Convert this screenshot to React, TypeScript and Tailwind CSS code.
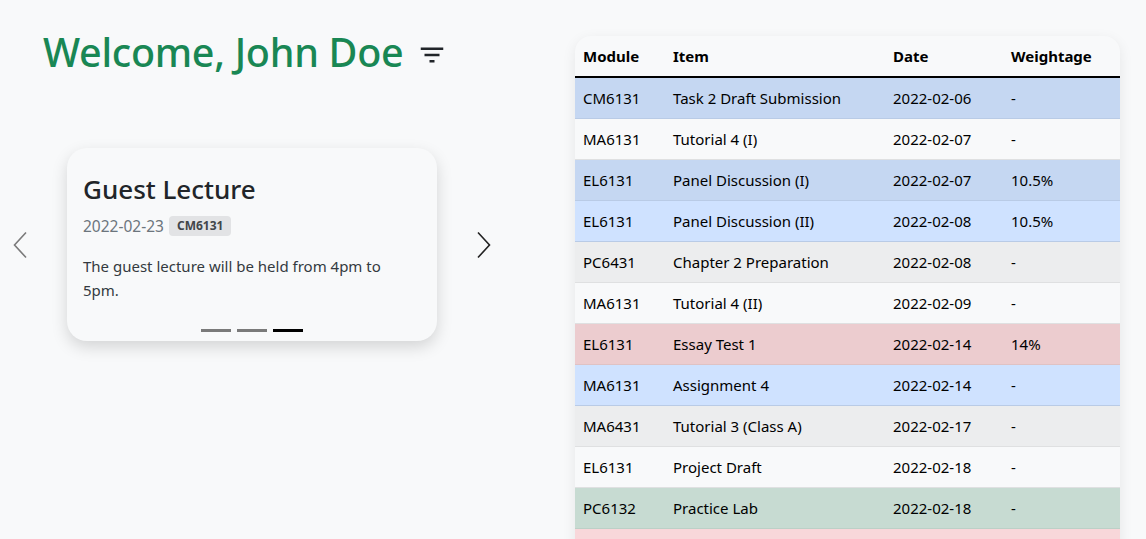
import React from "react";

type Row = { m: string; item: string; date: string; w: string; bg: string; border: string };

const rows: Row[] = [
  { m: "CM6131", item: "Task 2 Draft Submission", date: "2022-02-06", w: "-", bg: "bg-[#c5d7f2]", border: "border-[#b9cbe6]" },
  { m: "MA6131", item: "Tutorial 4 (I)", date: "2022-02-07", w: "-", bg: "bg-[#f8f9fa]", border: "border-[#dfe0e1]" },
  { m: "EL6131", item: "Panel Discussion (I)", date: "2022-02-07", w: "10.5%", bg: "bg-[#c5d7f2]", border: "border-[#b9cbe6]" },
  { m: "EL6131", item: "Panel Discussion (II)", date: "2022-02-08", w: "10.5%", bg: "bg-[#cfe2ff]", border: "border-[#b9cbe6]" },
  { m: "PC6431", item: "Chapter 2 Preparation", date: "2022-02-08", w: "-", bg: "bg-[#ecedee]", border: "border-[#dfe0e1]" },
  { m: "MA6131", item: "Tutorial 4 (II)", date: "2022-02-09", w: "-", bg: "bg-[#f8f9fa]", border: "border-[#dfe0e1]" },
  { m: "EL6131", item: "Essay Test 1", date: "2022-02-14", w: "14%", bg: "bg-[#eccccf]", border: "border-[#dfc2c4]" },
  { m: "MA6131", item: "Assignment 4", date: "2022-02-14", w: "-", bg: "bg-[#cfe2ff]", border: "border-[#b9cbe6]" },
  { m: "MA6431", item: "Tutorial 3 (Class A)", date: "2022-02-17", w: "-", bg: "bg-[#ecedee]", border: "border-[#dfe0e1]" },
  { m: "EL6131", item: "Project Draft", date: "2022-02-18", w: "-", bg: "bg-[#f8f9fa]", border: "border-[#dfe0e1]" },
  { m: "PC6132", item: "Practice Lab", date: "2022-02-18", w: "-", bg: "bg-[#c7dbd2]", border: "border-[#bcd0c7]" },
  { m: "\u00a0", item: "\u00a0", date: "\u00a0", w: "\u00a0", bg: "bg-[#f8d7da]", border: "border-[#dfc2c4]" },
];

export default function App() {
  return (
    <div
      className="h-[539px] w-[1146px] overflow-hidden bg-[#f8f9fa] text-[#212529]"
      style={{ fontFamily: '"Noto Sans", "Open Sans", sans-serif' }}
    >
      <div className="flex">
        {/* Left column */}
        <div className="w-[575px] shrink-0">
          <div className="flex items-center pl-[43px] pt-[28px]">
            <h1 className="text-[39.5px] leading-[48px] font-medium text-[#198754] tracking-[-0.3px]">
              Welcome, John Doe
            </h1>
            <svg className="ml-[14px] mt-[6px]" width="30" height="30" viewBox="0 0 24 24">
              <path d="M10 18h4v-2h-4v2zM3 6v2h18V6H3zm3 7h12v-2H6v2z" fill="#212529" />
            </svg>
          </div>

          <div className="mt-[72px] flex items-center w-[504px]">
            <button className="w-[40px] h-[40px] flex items-center justify-center">
              <svg width="16" height="28" viewBox="0 0 16 28" fill="none">
                <path d="M14 1.5 L2.5 14 L14 26.5" stroke="#7a7a7a" strokeWidth="1.6" />
              </svg>
            </button>
            <div className="ml-[27px] w-[370px] h-[193px] rounded-[20px] bg-[#f8f9fa] shadow-[0_6px_16px_rgba(0,0,0,0.15)] px-[16px] pt-[24px] relative">
              <h3 className="text-[26px] leading-[34px] font-medium text-[#212529]">Guest Lecture</h3>
              <div className="mt-[8px] flex items-center">
                <span className="text-[15.5px] leading-[24px] text-[#6c757d]">2022-02-23</span>
                <span className="ml-[5px] rounded-[4px] bg-[#e2e3e5] px-[8px] h-[20px] flex items-center text-[12px] font-bold text-[#41464b]">
                  CM6131
                </span>
              </div>
              <p className="mt-[16px] text-[15px] leading-[24px] text-[#343a40] pr-[40px]">
                The guest lecture will be held from 4pm to 5pm.
              </p>
              <div className="absolute left-0 right-0 bottom-[9px] flex justify-center gap-[6px]">
                <span className="w-[30px] h-[3px] bg-[#7a7a7a]" />
                <span className="w-[30px] h-[3px] bg-[#7a7a7a]" />
                <span className="w-[30px] h-[3px] bg-black" />
              </div>
            </div>
            <button className="ml-[27px] w-[40px] h-[40px] flex items-center justify-center">
              <svg width="16" height="28" viewBox="0 0 16 28" fill="none">
                <path d="M2 1.5 L13.5 14 L2 26.5" stroke="#222" strokeWidth="1.6" />
              </svg>
            </button>
          </div>
        </div>

        {/* Right column */}
        <div className="pt-[36px]">
          <div className="w-[545px] rounded-t-[16px] bg-[#f8f9fa] shadow-[0_4px_14px_rgba(0,0,0,0.08)] overflow-hidden">
            <table className="w-full border-collapse text-[15px] text-black">
              <thead>
                <tr className="border-b-2 border-black">
                  <th className="w-[90px] text-left font-bold px-[8px] py-[8px] leading-[24px]">Module</th>
                  <th className="w-[220px] text-left font-bold px-[8px] py-[8px] leading-[24px]">Item</th>
                  <th className="w-[118px] text-left font-bold px-[8px] py-[8px] leading-[24px]">Date</th>
                  <th className="text-left font-bold px-[8px] py-[8px] leading-[24px]">Weightage</th>
                </tr>
              </thead>
              <tbody>
                {rows.map((r, i) => (
                  <tr key={i} className={`${r.bg} border-b ${r.border}`}>
                    <td className="px-[8px] py-[8px] leading-[24px]">{r.m}</td>
                    <td className="px-[8px] py-[8px] leading-[24px]">{r.item}</td>
                    <td className="px-[8px] py-[8px] leading-[24px]">{r.date}</td>
                    <td className="px-[8px] py-[8px] leading-[24px]">{r.w}</td>
                  </tr>
                ))}
              </tbody>
            </table>
          </div>
        </div>
      </div>
    </div>
  );
}
